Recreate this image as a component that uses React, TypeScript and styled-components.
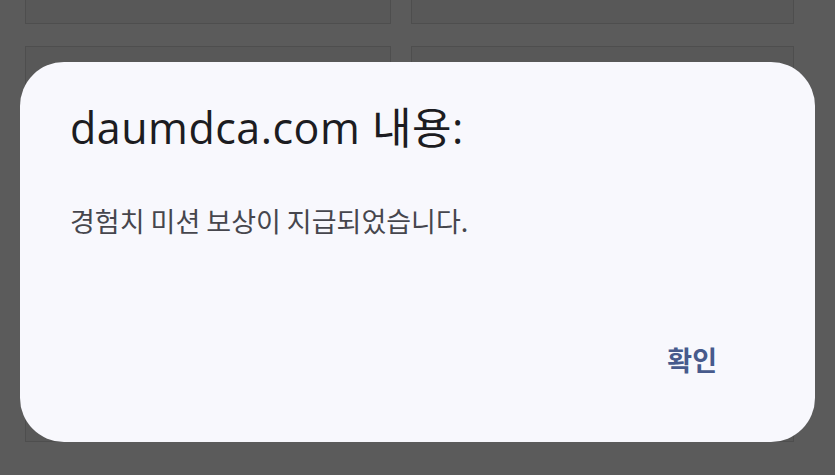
import React from "react";
import styled, { createGlobalStyle } from "styled-components";

const Global = createGlobalStyle`
  html, body { margin: 0; padding: 0; background: #5b5b5b; overflow: hidden; }
  body { width: 835px; height: 475px; font-family: Roboto, "Noto Sans CJK KR", sans-serif; }
`;

const Page = styled.div`
  position: relative;
  width: 835px;
  height: 475px;
  background: #5b5b5b;
  overflow: hidden;
`;

const CardGrid = styled.div`
  display: grid;
  grid-template-columns: 366px 383px;
  grid-template-rows: 100px 396px;
  column-gap: 20px;
  row-gap: 22px;
  padding-left: 25px;
  margin-top: -76px;
`;

const Card = styled.div`
  box-sizing: border-box;
  background: #585858;
  border: 1px solid #4e4e4e;
`;

const Overlay = styled.div`
  position: absolute;
  inset: 0;
`;

const Dialog = styled.div`
  position: absolute;
  left: 20px;
  top: 62px;
  width: 795px;
  height: 380px;
  box-sizing: border-box;
  background: #f8f8fd;
  border-radius: 44px;
  padding: 40px 50px 0 50px;
  display: flex;
  flex-direction: column;
`;

const Title = styled.h1`
  margin: 0;
  font-family: "Open Sans", "Noto Sans CJK KR", sans-serif;
  font-weight: 400;
  font-size: 43px;
  line-height: 52px;
  letter-spacing: 0.5px;
  color: #1c1c21;
`;

const Message = styled.p`
  margin: 50px 0 0 0;
  font-family: "Noto Sans CJK KR", sans-serif;
  font-weight: 400;
  font-size: 27px;
  line-height: 34px;
  color: #46464d;
`;

const Actions = styled.div`
  margin-top: auto;
  display: flex;
  justify-content: flex-end;
  padding: 0 0 64px 0;
`;

const Button = styled.button`
  border: none;
  background: transparent;
  padding: 0;
  margin-right: 48px;
  font-family: "Noto Sans CJK KR", sans-serif;
  font-weight: 600;
  font-size: 27px;
  line-height: 36px;
  color: #475a8c;
  cursor: pointer;
`;

export default function App() {
  return (
    <Page>
      <Global />
      <CardGrid>
        <Card />
        <Card />
        <Card />
        <Card />
      </CardGrid>
      <Overlay>
        <Dialog role="alertdialog">
          <Title>daumdca.com 내용:</Title>
          <Message>경험치 미션 보상이 지급되었습니다.</Message>
          <Actions>
            <Button>확인</Button>
          </Actions>
        </Dialog>
      </Overlay>
    </Page>
  );
}
